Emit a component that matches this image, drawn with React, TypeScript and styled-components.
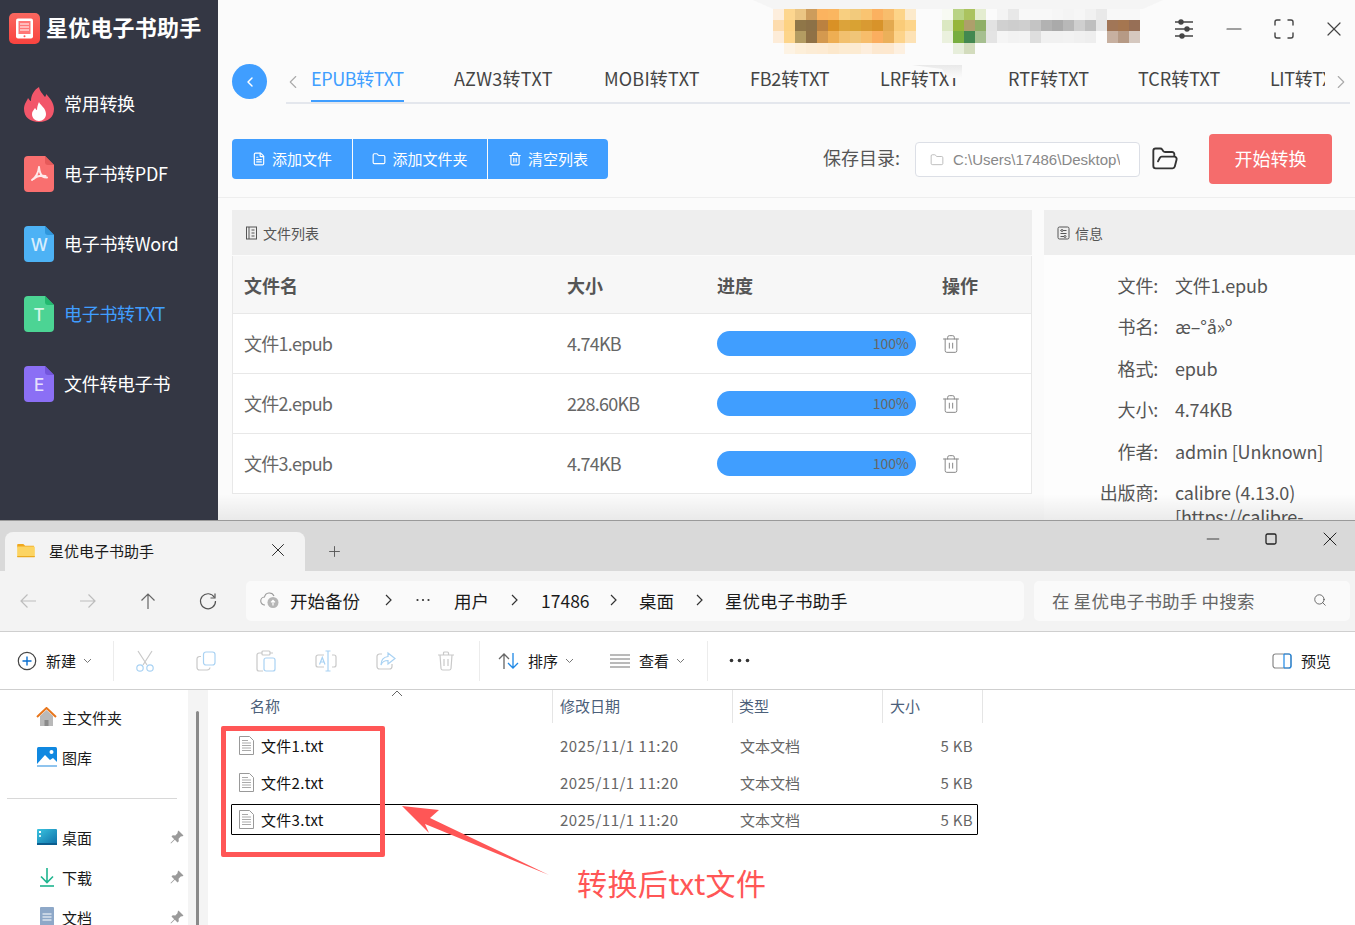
import React from "react";
import styled, { createGlobalStyle } from "styled-components";
import { ChevronLeft, ChevronRight, FileText, Folder, FolderOpen, Trash2, Minus, Maximize, X, Search, Plus } from "lucide-react";

const Global = createGlobalStyle`
  html, body { margin: 0; padding: 0; background: #fff; }
  body { font-family: "Noto Sans CJK SC", "Noto Sans", sans-serif; }
  * { box-sizing: border-box; }
`;

const Page = styled.div`
  position: relative;
  width: 1355px;
  height: 925px;
  overflow: hidden;
  display: flex;
  flex-direction: column;
`;

/* ---------- converter window ---------- */
const AppWindow = styled.div`
  position: relative;
  height: 520px;
  flex: none;
  display: flex;
  overflow: hidden;
  background: #fbfbfb;
  &::after {
    content: "";
    position: absolute;
    left: 218px;
    right: 0;
    bottom: 0;
    height: 26px;
    background: linear-gradient(to bottom, rgba(0,0,0,0), rgba(0,0,0,.07));
    pointer-events: none;
  }
`;
const Sidebar = styled.aside`
  width: 218px;
  flex: none;
  background: #343744;
  display: flex;
  flex-direction: column;
`;
const Brand = styled.div`
  height: 69px;
  padding: 13px 0 0 9px;
  display: flex;
  align-items: flex-start;
  gap: 6px;
`;
const BrandName = styled.div`
  color: #fff;
  font-size: 22px;
  font-weight: 700;
  line-height: 27px;
  letter-spacing: 0.2px;
  white-space: nowrap;
`;
const SideList = styled.nav`
  display: flex;
  flex-direction: column;
`;
const SideItem = styled.div<{ $active?: boolean }>`
  height: 70px;
  padding-left: 24px;
  display: flex;
  align-items: center;
  gap: 10px;
  font-size: 18px;
  letter-spacing: -0.3px;
  white-space: nowrap;
  color: ${(p) => (p.$active ? "#409eff" : "#fff")};
  svg { flex: none; }
`;
const SideLabel = styled.span`
  margin-top: -2px;
`;
const Main = styled.main`
  flex: 1;
  min-width: 0;
  display: flex;
  flex-direction: column;
`;
const TitleBar = styled.div`
  position: relative;
  height: 61px;
  flex: none;
  display: flex;
  justify-content: flex-end;
  align-items: center;
`;
const Mosaic = styled.svg`
  position: absolute;
  left: 525px;
  top: 0;
`;
const WinBtn = styled.div`
  width: 50px;
  height: 40px;
  margin-top: -4px;
  display: flex;
  align-items: center;
  justify-content: center;
  color: #444;
  &:last-child { margin-right: -4px; }
`;
const TabsRow = styled.div`
  position: relative;
  height: 43px;
  flex: none;
  display: flex;
  padding-left: 14px;
`;
const Back = styled.div`
  width: 35px;
  height: 35px;
  margin-top: 3px;
  border-radius: 50%;
  background: #409eff;
  color: #fff;
  display: flex;
  align-items: center;
  justify-content: center;
  flex: none;
`;
const TabBar = styled.div`
  margin-left: 19px;
  width: 1064px;
  height: 43px;
  border-bottom: 2px solid #e4e7ed;
  display: flex;
  position: relative;
`;
const TabNav = styled.div<{ $end?: boolean }>`
  width: 25px;
  flex: none;
  height: 41px;
  display: flex;
  align-items: center;
  justify-content: ${(p) => (p.$end ? "flex-end" : "flex-start")};
  color: #aaa;
  svg { margin: ${(p) => (p.$end ? "0 -2px 0 0" : "0 0 0 -4px")}; }
`;
const TabStrip = styled.div`
  width: 1015px;
  overflow: hidden;
  display: flex;
  gap: 50px;
`;
const Tab = styled.div<{ $w: number; $ls: number; $active?: boolean }>`
  flex: none;
  width: ${(p) => p.$w}px;
  height: 41px;
  line-height: 35px;
  font-size: 18px;
  letter-spacing: ${(p) => p.$ls}px;
  white-space: nowrap;
  color: ${(p) => (p.$active ? "#409eff" : "#444")};
  position: relative;
  &::after {
    content: "";
    position: absolute;
    left: 0;
    right: 0;
    bottom: 0;
    height: 2px;
    background: ${(p) => (p.$active ? "#409eff" : "transparent")};
  }
`;
const Smear = styled.div`
  position: absolute;
  left: 694px;
  top: 4px;
  width: 50px;
  height: 13px;
  background: linear-gradient(to bottom, #e9e9e9, #fbfbfb);
  clip-path: polygon(0 0, 100% 0, 100% 100%, 72% 100%, 60% 30%);
`;
const ActionRow = styled.div`
  height: 94px;
  flex: none;
  padding: 30px 23px 0 14px;
  border-bottom: 1px solid #eeeeee;
  display: flex;
  align-items: flex-start;
`;
const BtnGroup = styled.div`
  display: flex;
  height: 40px;
  margin-top: 5px;
  border-radius: 4px;
  overflow: hidden;
`;
const GroupBtn = styled.div<{ $w: number }>`
  width: ${(p) => p.$w}px;
  background: #409eff;
  color: #fff;
  font-size: 15px;
  display: flex;
  align-items: center;
  justify-content: center;
  gap: 6px;
  padding-bottom: 1px;
  & + & { margin-left: 1px; }
`;
const SaveLabel = styled.div`
  margin-left: auto;
  font-size: 18px;
  color: #555;
  line-height: 46px;
  white-space: nowrap;
`;
const PathBox = styled.div`
  width: 225px;
  height: 35px;
  margin: 8px 0 0 15px;
  border: 1px solid #dcdfe6;
  border-radius: 4px;
  background: #fff;
  display: flex;
  align-items: center;
  gap: 9px;
  padding: 0 19px 0 14px;
  color: #aaa;
  overflow: hidden;
`;
const PathText = styled.span`
  font-family: "Liberation Sans", sans-serif;
  font-size: 15px;
  color: #888;
  white-space: nowrap;
  overflow: hidden;
`;
const FolderBtn = styled.div`
  margin: 11px 30px 0 11px;
  color: #333;
  height: 28px;
`;
const StartBtn = styled.div`
  width: 123px;
  height: 50px;
  background: #f56c6c;
  border-radius: 4px;
  color: #fff;
  font-size: 18px;
  padding-bottom: 3px;
  display: flex;
  align-items: center;
  justify-content: center;
`;
const Panels = styled.div`
  flex: 1;
  display: flex;
  padding: 12px 0 0 14px;
  gap: 12px;
  min-height: 0;
`;
const ListPanel = styled.section`
  width: 800px;
  flex: none;
`;
const InfoPanel = styled.section`
  flex: 1;
  min-width: 0;
  background: #fdfdfd;
  overflow: hidden;
`;
const PanelHead = styled.div`
  height: 45px;
  background: #eeeeee;
  display: flex;
  align-items: center;
  gap: 5px;
  padding-left: 13px;
  font-size: 14px;
  color: #555;
  svg { flex: none; }
`;
const TableGrid = styled.div`
  display: grid;
  grid-template-columns: 323px 150px 225px 1fr;
  align-items: center;
  padding-left: 11px;
  border: 1px solid #e8e8e8;
  border-top: none;
  color: #666;
`;
const TableHead = styled(TableGrid)`
  height: 58px;
  margin-top: 1px;
  background: #f7f7f7;
  font-size: 18px;
  font-weight: 700;
  color: #555;
`;
const TableRow = styled(TableGrid)`
  height: 60px;
  background: #fff;
  font-size: 18px;
`;
const RowText = styled.div`
  letter-spacing: -0.75px;
  padding-bottom: 2px;
`;
const Bar = styled.div`
  width: 199px;
  height: 25px;
  border-radius: 13px;
  background: #409eff;
  color: #666;
  font-size: 14px;
  line-height: 25px;
  text-align: right;
  padding-right: 7px;
`;
const TrashCell = styled.div`
  color: #888;
  display: flex;
  margin-left: -1px;
`;
const InfoBody = styled.div`
  padding-top: 17.8px;
  display: flex;
  flex-direction: column;
  gap: 17.5px;
`;
const InfoRow = styled.div`
  display: grid;
  grid-template-columns: 114px 1fr;
  column-gap: 17px;
  font-size: 18px;
  line-height: 24px;
  color: #555;
  letter-spacing: -0.2px;
`;
const InfoLabel = styled.div`
  text-align: right;
  white-space: nowrap;
`;
const InfoValue = styled.div`
  width: 170px;
  word-break: break-word;
`;

/* ---------- explorer window ---------- */
const Explorer = styled.div`
  flex: 1;
  min-height: 0;
  display: flex;
  flex-direction: column;
  background: #fff;
  border-top: 1px solid #9a9a9a;
`;
const ExTabs = styled.div`
  height: 50px;
  flex: none;
  background: #d9d9d9;
  display: flex;
  align-items: flex-end;
  padding-left: 5px;
`;
const ExTab = styled.div`
  width: 300px;
  height: 39px;
  background: #f3f3f3;
  border-radius: 8px 8px 0 0;
  display: flex;
  align-items: center;
  padding: 0 16px 3px 12px;
  font-size: 15px;
  color: #1a1a1a;
`;
const ExTabLabel = styled.span`
  margin-left: 14px;
  flex: 1;
`;
const NewTab = styled.div`
  margin: 0 0 0 21px;
  height: 39px;
  display: flex;
  align-items: center;
  color: #555;
`;
const ExControls = styled.div`
  margin-left: auto;
  margin-right: -4px;
  align-self: flex-start;
  height: 36px;
  display: flex;
  align-items: center;
  color: #222;
`;
const ExControl = styled.div`
  width: 58.5px;
  display: flex;
  justify-content: center;
`;
const AddressRow = styled.div`
  height: 61px;
  flex: none;
  background: #f3f3f3;
  border-bottom: 1px solid #cfcfcf;
  display: flex;
  align-items: center;
  padding: 0 5px 0 0;
`;
const NavBtn = styled.div`
  width: 60px;
  flex: none;
  display: flex;
  justify-content: center;
`;
const NavGroup = styled.div`
  display: flex;
  margin-left: -2px;
  margin-right: 8px;
`;
const Crumbs = styled.div`
  width: 778px;
  height: 40px;
  background: #fafafa;
  border-radius: 5px;
  display: flex;
  align-items: center;
  padding: 0 0 2px 14px;
  font-size: 17.5px;
  color: #1a1a1a;
  white-space: nowrap;
`;
const Crumb = styled.span<{ $w: number; $pl?: number }>`
  width: ${(p) => p.$w}px;
  padding-left: ${(p) => p.$pl ?? 0}px;
  flex: none;
`;
const CrumbSep = styled.span`
  width: 26px;
  flex: none;
  display: flex;
  justify-content: center;
  color: #333;
`;
const SearchBox = styled.div`
  margin-left: 10px;
  flex: 1;
  height: 40px;
  background: #fafafa;
  border-radius: 5px;
  display: flex;
  align-items: center;
  justify-content: space-between;
  padding: 0 23px 2px 18px;
  font-size: 17.5px;
  letter-spacing: 0.17px;
  color: #666;
  white-space: nowrap;
`;
const ExToolbar = styled.div`
  height: 58px;
  flex: none;
  border-bottom: 1px solid #cfcfcf;
  display: flex;
  align-items: center;
  font-size: 15px;
  color: #1a1a1a;
  white-space: nowrap;
`;
const ToolText = styled.div<{ $w: number; $pl?: number }>`
  width: ${(p) => p.$w}px;
  padding-left: ${(p) => p.$pl ?? 0}px;
  flex: none;
  display: flex;
  align-items: center;
  gap: 9px;
`;
const Caret = styled.svg`
  margin-left: -2px;
  flex: none;
`;
const ToolSep = styled.div`
  width: 1px;
  height: 40px;
  background: #ececec;
  flex: none;
`;
const ToolSlot = styled.div<{ $w?: number }>`
  width: ${(p) => p.$w ?? 60}px;
  flex: none;
  display: flex;
  justify-content: center;
`;
const ToolSpacer = styled.div`
  flex: 1;
`;
const ExBody = styled.div`
  flex: 1;
  min-height: 0;
  display: flex;
  overflow: hidden;
`;
const ExNav = styled.nav`
  width: 188px;
  flex: none;
  padding-top: 7px;
`;
const NavItem = styled.div`
  height: 40px;
  display: flex;
  align-items: center;
  padding-left: 37px;
  font-size: 15px;
  color: #1a1a1a;
  position: relative;
  gap: 5px;
  white-space: nowrap;
`;
const Pin = styled.svg`
  position: absolute;
  left: 170px;
  top: 13px;
`;
const NavRule = styled.div`
  height: 1px;
  margin: 21px 11px 18px 7px;
  background: #d8d8d8;
`;
const ScrollTrack = styled.div`
  width: 20px;
  flex: none;
  background: #f4f4f4;
  padding: 21px 8px 0;
  margin-right: 2px;
`;
const ScrollThumb = styled.div`
  width: 3px;
  height: 300px;
  background: #8a8a8a;
  border-radius: 2px;
`;
const FilePane = styled.div`
  flex: 1;
  min-width: 0;
  position: relative;
`;
const FileHead = styled.div`
  height: 33px;
  display: flex;
  font-size: 15px;
  color: #4c607a;
`;
const HeadCell = styled.div<{ $w: number; $pl: number }>`
  width: ${(p) => p.$w}px;
  flex: none;
  padding-left: ${(p) => p.$pl}px;
  line-height: 31px;
  border-right: 1px solid #e5e5e5;
`;
const HeadCellFirst = styled(HeadCell)`
  position: relative;
  svg { position: absolute; left: 181px; top: 0; }
`;
const FileRows = styled.div`
  padding: 7px 0 0 21px;
  display: flex;
  flex-direction: column;
  gap: 6px;
`;
const FileRow = styled.div<{ $sel?: boolean }>`
  width: 747px;
  height: 31px;
  display: grid;
  grid-template-columns: 22px 299px 180px 1fr;
  align-items: center;
  font-size: 15px;
  color: #666;
  padding: 0 5px 0 8px;
  border-radius: 1px;
  outline: ${(p) => (p.$sel ? "1.5px solid #000" : "none")};
  outline-offset: -1px;
`;
const FileName = styled.div`
  color: #111;
  letter-spacing: 0.3px;
`;
const FileDate = styled.div`
  letter-spacing: 0.52px;
`;
const FileTail = styled.div`
  display: flex;
  justify-content: space-between;
`;
const FileSize = styled.div`
  text-align: right;
  letter-spacing: 0.3px;
`;

/* ---------- annotation ---------- */
const RedFrame = styled.div`
  position: absolute;
  left: 221px;
  top: 726px;
  width: 164px;
  height: 131px;
  border: 5px solid #ff5656;
  border-radius: 2px;
  pointer-events: none;
`;
const Arrow = styled.svg`
  position: absolute;
  left: 395px;
  top: 800px;
`;
const Note = styled.div`
  position: absolute;
  left: 577px;
  top: 860px;
  font-size: 30px;
  letter-spacing: 0.4px;
  line-height: 44px;
  color: #ff5656;
  white-space: nowrap;
`;

/* ---------- drawings ---------- */
const BLOCK_A: string[][] = [
  ["#fdeedd","#fdd68f","#ebc583","#cd9c5c","#fbb35f","#fab660","#f8cf80","#f2ca7c","#f9c471","#fbb160","#f8bd6c","#fdd488","#fceacb"],
  ["#fddcae","#fdd283","#8f7648","#8c7147","#bb8140","#d99126","#dca33a","#d9a233","#d99a32","#d8932a","#e3a94f","#facb78","#fdd58b"],
  ["#fdecd8","#fdd58a","#b39c62","#8f7146","#d4994f","#eeae53","#f2c06f","#f0c578","#f7bd6b","#fbae5f","#ebb05a","#fdd38a","#fde2b5"],
  ["#fbfbfb","#fdf3e4","#fdefd9","#fcecd5","#fdebd3","#fce8cc","#fcebd2","#fcebd2","#fdeedd","#fce8d0","#fde8cf","#fdf0e0","#fbfbfb"],
];
const BLOCK_B: string[][] = [
  ["#f8faf3","#b9d385","#abc35f","#e4edd0","#fbfbfb","#f4f4f4","#e8e8e8","#f8f8f8","#f8f8f8","#f8f8f8","#f6f6f6","#f4f4f4","#f6f6f6","#f1f1f1","#e9e9e9","#f8f8f8","#f8f8f8","#f8f8f8"],
  ["#dbe8c2","#96b63b","#ae9f6b","#8fae66","#e2e2e2","#d0d0d0","#cdcdcd","#cfcfcf","#c4c4c4","#b2b2b2","#aaaaaa","#b8b8b8","#cfcfcf","#bfbfbf","#e6e6e6","#a17657","#a57650","#976f56"],
  ["#ebf1de","#78ae3f","#438850","#a6bf90","#e4e4e4","#f5f5f5","#f2f2f2","#f3f3f3","#dedede","#f1f1f1","#f1f1f1","#f2f2f2","#f0f0f0","#eeeeee","#fbfbfb","#c7b0a0","#b69a85","#d5c8bf"],
  ["#fbfbfb","#e7eedb","#d3dcbd","#fbfbfb"],
];

const MosaicArt = () => (
  <Mosaic width="420" height="56" viewBox="0 0 420 56">
    <path d="M10 0H420L400 9H30Z" fill="#f4f4f4" opacity="0.8" />
    {BLOCK_A.map((row, y) => row.map((c, x) => <rect key={`a${y}-${x}`} x={30 + x * 11} y={y === 3 ? 43 : 9 + y * 11} width="11" height={y === 2 ? 12 : 11} fill={c} />))}
    {BLOCK_B.map((row, y) => row.map((c, x) => <rect key={`b${y}-${x}`} x={199 + x * 11} y={y === 3 ? 43 : 9 + y * 11} width="11" height={y === 2 ? 12 : 11} fill={c} />))}
  </Mosaic>
);

const LogoIcon = () => (
  <svg width="31" height="31" viewBox="0 0 31 31">
    <defs>
      <linearGradient id="lg" x1="0" y1="0" x2="0" y2="1">
        <stop offset="0" stopColor="#f9675f" />
        <stop offset="1" stopColor="#f9433f" />
      </linearGradient>
    </defs>
    <rect width="31" height="31" rx="5" fill="url(#lg)" />
    <rect x="7" y="5.5" width="17" height="20" rx="2" fill="#fff" />
    <rect x="9.5" y="8" width="12" height="13" fill="#f77" />
    <path d="M11 11h9M11 14h9M11 17h9" stroke="#fff" strokeWidth="1" />
    <circle cx="15.5" cy="23.3" r="1" fill="#f55" />
  </svg>
);

const Flame = () => (
  <svg width="32" height="36" viewBox="0 0 32 36" style={{ marginLeft: -1, marginRight: -1 }}>
    <path d="M16 1c1 5 4 7 6 10 1-1 1-2 1-3 4 4 8 9 8 15 0 8-6 13-15 13S1 31 1 23c0-5 3-8 4-11 1 1 2 3 3 3 0-6 3-11 8-14z" fill="#f2566a" />
    <path d="M16 16c1 3 7 6 7 12 0 4-3 7-7 7s-7-3-7-7c0-3 2-4 3-6 1 1 1 2 2 2 0-3 1-6 2-8z" fill="#fff" />
  </svg>
);

const FileBadge = ({ bg, fold, letter }: { bg: string; fold: string; letter?: string }) => (
  <svg width="30" height="36" viewBox="0 0 30 36">
    <path d="M4 0h17l9 9v23a4 4 0 0 1-4 4H4a4 4 0 0 1-4-4V4a4 4 0 0 1 4-4z" fill={bg} />
    <path d="M21 0l9 9h-6a3 3 0 0 1-3-3z" fill={fold} />
    {letter ? (
      <text x="15" y="24.5" textAnchor="middle" fontSize="17" fontWeight="500" fill="#fff" fillOpacity="0.8" fontFamily="Inter, sans-serif">{letter}</text>
    ) : (
      <path d="M15 11c-.5 5-3 10-7 13M15 11c.5 5 2 8 3.5 9.5 1.5 1 3 1 4.5 1M9.5 23c3-3 8-3.5 12-3" fill="none" stroke="#fff" strokeOpacity=".85" strokeWidth="2" strokeLinecap="round" />
    )}
  </svg>
);

const Sliders = () => (
  <svg width="22" height="22" viewBox="0 0 22 22" fill="none" stroke="#444" strokeWidth="1.4">
    <path d="M2 4h18M2 11h18M2 18h18" />
    <circle cx="8" cy="4" r="2" fill="#444" />
    <circle cx="14" cy="11" r="2" fill="#444" />
    <circle cx="9" cy="18" r="2" fill="#444" />
  </svg>
);

const ListIcon = () => (
  <svg width="13" height="14" viewBox="0 0 13 14" fill="none" stroke="#555" strokeWidth="1">
    <rect x="1.5" y="1" width="10" height="12" />
    <path d="M4 1v12M6.5 4h3M6.5 7h3M6.5 10h3" />
  </svg>
);
const InfoIcon = () => (
  <svg width="13" height="14" viewBox="0 0 13 14" fill="none" stroke="#555" strokeWidth="1">
    <rect x="1" y="1" width="11" height="12" rx="1.5" />
    <path d="M3.5 4.5h6M3.5 7.5h6M3.5 10.5h4" />
    <circle cx="5" cy="4.5" r="1" fill="#fff" />
    <circle cx="8" cy="10.5" r="1" fill="#fff" />
  </svg>
);

const ExFolder = () => (
  <svg width="18" height="15" viewBox="0 0 20 17">
    <path d="M0 2a1 1 0 0 1 1-1h6l2 2h10v2H0z" fill="#f0a81e" />
    <path d="M0 4h19a1 1 0 0 1 1 1v10a1 1 0 0 1-1 1H1a1 1 0 0 1-1-1z" fill="#fcd462" />
    <path d="M0 14.6h20v.6a1 1 0 0 1-1 1H1a1 1 0 0 1-1-1z" fill="#eaa91e" />
  </svg>
);

const ArrowGlyph = ({ dir, color }: { dir: "l" | "r" | "u"; color: string }) => {
  const d = dir === "l" ? "M18 10H3M9.5 3.5L3 10l6.5 6.5" : dir === "r" ? "M2 10h15M10.5 3.5L17 10l-6.5 6.5" : "M10 18V3M3.5 9.5L10 3l6.5 6.5";
  return (
    <svg width="20" height="20" viewBox="0 0 20 20" fill="none" stroke={color} strokeWidth="1.2">
      <path d={d} />
    </svg>
  );
};
const Refresh = () => (
  <svg width="20" height="20" viewBox="0 0 20 20" fill="none" stroke="#555" strokeWidth="1.2">
    <path d="M16.5 6.5A7.5 7.5 0 1 0 17.5 10" />
    <path d="M17 2.5v4.5h-4.5" />
  </svg>
);
const CloudUp = () => (
  <svg width="20" height="20" viewBox="0 0 20 20" style={{ marginRight: 10, flex: "none" }}>
    <path d="M5 15a4 4 0 0 1-.5-8A5 5 0 0 1 14 6" fill="none" stroke="#999" strokeWidth="1.1" />
    <circle cx="13" cy="12.5" r="5.5" fill="#b5b5b5" />
    <path d="M13 15.5v-5M11 12.3l2-2 2 2" fill="none" stroke="#fff" strokeWidth="1.2" />
  </svg>
);
const SepChevron = () => (
  <svg width="9" height="14" viewBox="0 0 9 14" fill="none" stroke="#333" strokeWidth="1.2">
    <path d="M2 2l5 5-5 5" />
  </svg>
);
const BreadDots = () => (
  <svg width="14" height="4" viewBox="0 0 14 4" fill="#333">
    <circle cx="1.5" cy="2" r="1.1" /><circle cx="7" cy="2" r="1.1" /><circle cx="12.5" cy="2" r="1.1" />
  </svg>
);
const ToolDots = () => (
  <svg width="21" height="5" viewBox="0 0 21 5" fill="#333">
    <circle cx="2.5" cy="2.5" r="1.8" /><circle cx="10.5" cy="2.5" r="1.8" /><circle cx="18.5" cy="2.5" r="1.8" />
  </svg>
);
const Down = () => (
  <Caret width="9" height="6" viewBox="0 0 9 6" fill="none" stroke="#777" strokeWidth="1">
    <path d="M1 1l3.5 3.5L8 1" />
  </Caret>
);

const NewIcon = () => (
  <svg width="20" height="20" viewBox="0 0 20 20" fill="none">
    <circle cx="10" cy="10" r="8.7" stroke="#444" strokeWidth="1.2" />
    <path d="M10 5.5v9M5.5 10h9" stroke="#0a6fd0" strokeWidth="1.4" />
  </svg>
);
const BLUE = "#a9d2f3";
const GREY = "#c9c9c9";
const Cut = () => (
  <svg width="20" height="22" viewBox="0 0 20 22" fill="none" strokeWidth="1.2">
    <path d="M3 1l9 14M17 1L8 15" stroke={GREY} />
    <circle cx="5" cy="18" r="3.2" stroke={BLUE} />
    <circle cx="15" cy="18" r="3.2" stroke={BLUE} />
  </svg>
);
const CopyI = () => (
  <svg width="20" height="20" viewBox="0 0 20 20" fill="none" strokeWidth="1.2">
    <rect x="7.5" y="1" width="11.5" height="13" rx="2.5" stroke={BLUE} />
    <path d="M5 5.5H3.5A2.5 2.5 0 0 0 1 8v8.5A2.5 2.5 0 0 0 3.5 19H11a3 3 0 0 0 3-2.5" stroke={GREY} />
  </svg>
);
const Paste = () => (
  <svg width="20" height="22" viewBox="0 0 20 22" fill="none" strokeWidth="1.2">
    <path d="M6 3H3a2 2 0 0 0-2 2v14a2 2 0 0 0 2 2h4M14 3h3" stroke={GREY} />
    <rect x="6" y="1" width="8" height="4" rx="1" stroke={GREY} />
    <rect x="8" y="8" width="11" height="13" rx="2" stroke={BLUE} />
  </svg>
);
const Rename = () => (
  <svg width="22" height="22" viewBox="0 0 22 22" fill="none" strokeWidth="1.2">
    <path d="M9 5H3a2 2 0 0 0-2 2v8a2 2 0 0 0 2 2h6M17 5h2a2 2 0 0 1 2 2v8a2 2 0 0 1-2 2h-2" stroke={GREY} />
    <path d="M13 1v20M10.5 1h5M10.5 21h5" stroke={BLUE} />
    <path d="M4.5 14.5l2.8-7 2.7 7M5.5 12h3.6" stroke={BLUE} />
  </svg>
);
const Share = () => (
  <svg width="20" height="20" viewBox="0 0 20 20" fill="none" strokeWidth="1.2">
    <path d="M6 3H3.5A2.5 2.5 0 0 0 1 5.5v10A2.5 2.5 0 0 0 3.5 18h10a2.5 2.5 0 0 0 2.5-2.5V13" stroke={GREY} />
    <path d="M12 2l7 5.5-7 5.5V9.5C8 9.5 6 11 5 14c0-5 3-8 7-8.5z" stroke={BLUE} />
  </svg>
);
const TrashGrey = () => (
  <svg width="18" height="20" viewBox="0 0 18 20" fill="none" stroke={GREY} strokeWidth="1.2">
    <path d="M1 4h16M6.5 4V2a1 1 0 0 1 1-1h3a1 1 0 0 1 1 1v2M3 4l1 13.5A1.8 1.8 0 0 0 5.8 19h6.4a1.8 1.8 0 0 0 1.8-1.5L15 4M7 8v7M11 8v7" />
  </svg>
);
const SortI = () => (
  <svg width="21" height="18" viewBox="0 0 21 18" fill="none" strokeWidth="1.3">
    <path d="M6 17V2M1 7l5-5 5 5" stroke="#666" />
    <path d="M15 1v15M10 11l5 5 5-5" stroke="#1e88e5" />
  </svg>
);
const ViewI = () => (
  <svg width="20" height="14" viewBox="0 0 20 14" stroke="#777" strokeWidth="1.2">
    <path d="M0 1h20M0 5h20M0 9h20M0 13h20" />
  </svg>
);
const Preview = () => (
  <svg width="20" height="16" viewBox="0 0 20 16" fill="none" strokeWidth="1.2">
    <rect x="1" y="1" width="18" height="14" rx="2.5" stroke="#888" />
    <path d="M12 1v14M12 1h5a2 2 0 0 1 2 2v10a2 2 0 0 1-2 2h-5" stroke="#1e88e5" />
  </svg>
);
const Home = () => (
  <svg width="21" height="20" viewBox="0 0 21 20" style={{ marginLeft: -1 }}>
    <path d="M4 9l6.5-6L17 9v10H4z" fill="#b9b9b9" />
    <rect x="8.5" y="13" width="4" height="6" fill="#8a8a8a" />
    <path d="M1 10l9.5-9L20 10" fill="none" stroke="#e8761c" strokeWidth="2" />
  </svg>
);
const Gallery = () => (
  <svg width="20" height="20" viewBox="0 0 20 20">
    <rect width="20" height="19" rx="1.5" fill="#1088e0" />
    <path d="M0 17l8-9 5 5 3-2 4 4v4H0z" fill="#fff" />
    <circle cx="14.5" cy="5" r="2" fill="#fff" />
    <rect y="18" width="20" height="2" fill="#8fc4ee" />
  </svg>
);
const Desk = () => (
  <svg width="20" height="16" viewBox="0 0 20 16">
    <defs>
      <linearGradient id="dk" x1="0" y1="0" x2="1" y2="1">
        <stop offset="0" stopColor="#3ac4e0" />
        <stop offset="1" stopColor="#0f70a8" />
      </linearGradient>
    </defs>
    <rect width="20" height="15" rx="1" fill="url(#dk)" />
    <rect x="2" y="2" width="2" height="2" fill="#fff" />
    <rect x="2" y="6" width="2" height="2" fill="#cdeff7" />
    <rect y="14" width="20" height="2" fill="#0c5d8e" />
  </svg>
);
const Download = () => (
  <svg width="20" height="20" viewBox="0 0 20 20" fill="none" stroke="#1fb58f" strokeWidth="1.6">
    <path d="M10 1v14M4 9.5l6 6 6-6" />
    <path d="M3 19h14" />
  </svg>
);
const Doc = () => (
  <svg width="20" height="20" viewBox="0 0 20 20">
    <rect x="3" width="14" height="20" rx="1" fill="#8ea8c8" />
    <path d="M5.5 7h9M5.5 10h9M5.5 13h9" stroke="#fff" strokeWidth="1.2" />
  </svg>
);
const PinIcon = () => (
  <Pin width="14" height="14" viewBox="0 0 14 14" fill="#9a9a9a">
    <path d="M8.5 0.5l5 5-1.5 1-1-.2-2.4 2.4.2 2.6-1.3 1.2-2.7-2.7L1 13.5l-.5-.5 3.7-3.8L1.5 6.5 2.7 5.2l2.6.2L7.7 3 7.5 2z" />
  </Pin>
);
const TxtIcon = () => (
  <svg width="15" height="19" viewBox="0 0 15 19" fill="#fff" stroke="#999" strokeWidth="1">
    <path d="M.5.5h10l4 4v14H.5z" />
    <path d="M3 4.5h6M3 7h9M3 9.5h9M3 12h9M3 14.5h9" fill="none" stroke="#aaa" />
  </svg>
);

const TABS: [string, number, number][] = [
  ["EPUB转TXT", 93, -0.4], ["AZW3转TXT", 100, 0.3], ["MOBI转TXT", 96, 0.2], ["FB2转TXT", 80, -0.2],
  ["LRF转TXT", 78, -0.1], ["RTF转TXT", 80, 0], ["TCR转TXT", 82, 0], ["LIT转TXT", 80, -0.4],
];
const FILES = [["文件1.epub", "4.74KB"], ["文件2.epub", "228.60KB"], ["文件3.epub", "4.74KB"]];
const INFO: [string, string][] = [
  ["文件:", "文件1.epub"], ["书名:", "æ–°å»º"], ["格式:", "epub"], ["大小:", "4.74KB"],
  ["作者:", "admin [Unknown]"], ["出版商:", "calibre (4.13.0) [https://calibre-ebook.com]"],
];
const TXT = ["文件1.txt", "文件2.txt", "文件3.txt"];

export default function App() {
  return (
    <Page>
      <Global />
      <AppWindow>
        <Sidebar>
          <Brand><LogoIcon /><BrandName>星优电子书助手</BrandName></Brand>
          <SideList>
            <SideItem><Flame /><SideLabel>常用转换</SideLabel></SideItem>
            <SideItem><FileBadge bg="#f96f6f" fold="#e65a5a" /><SideLabel>电子书转PDF</SideLabel></SideItem>
            <SideItem><FileBadge bg="#4db2f5" fold="#2f96dc" letter="W" /><SideLabel>电子书转Word</SideLabel></SideItem>
            <SideItem $active><FileBadge bg="#4cd494" fold="#22b96f" letter="T" /><SideLabel>电子书转TXT</SideLabel></SideItem>
            <SideItem><FileBadge bg="#8b6ff5" fold="#7355dc" letter="E" /><SideLabel>文件转电子书</SideLabel></SideItem>
          </SideList>
        </Sidebar>
        <Main>
          <TitleBar>
            <MosaicArt />
            <WinBtn><Sliders /></WinBtn>
            <WinBtn><Minus size={24} strokeWidth={1.2} /></WinBtn>
            <WinBtn><Maximize size={24} strokeWidth={1.4} /></WinBtn>
            <WinBtn><X size={24} strokeWidth={1.2} /></WinBtn>
          </TitleBar>
          <TabsRow>
            <Back><ChevronLeft size={16} strokeWidth={2.2} /></Back>
            <TabBar>
              <TabNav><ChevronLeft size={22} strokeWidth={1.2} /></TabNav>
              <TabStrip>
                {TABS.map(([t, w, ls], i) => <Tab key={t} $w={w} $ls={ls} $active={i === 0}>{t}</Tab>)}
              </TabStrip>
              <TabNav $end><ChevronRight size={22} strokeWidth={1.2} /></TabNav>
            </TabBar>
            <Smear />
          </TabsRow>
          <ActionRow>
            <BtnGroup>
              <GroupBtn $w={120}><FileText size={14} />添加文件</GroupBtn>
              <GroupBtn $w={134}><Folder size={14} />添加文件夹</GroupBtn>
              <GroupBtn $w={120}><Trash2 size={14} />清空列表</GroupBtn>
            </BtnGroup>
            <SaveLabel>保存目录:</SaveLabel>
            <PathBox><Folder size={14} strokeWidth={1.3} style={{ flex: "none" }} /><PathText>C:\Users\17486\Desktop\</PathText></PathBox>
            <FolderBtn><FolderOpen size={28} strokeWidth={1.6} /></FolderBtn>
            <StartBtn>开始转换</StartBtn>
          </ActionRow>
          <Panels>
            <ListPanel>
              <PanelHead><ListIcon />文件列表</PanelHead>
              <TableHead><div>文件名</div><div>大小</div><div>进度</div><div>操作</div></TableHead>
              {FILES.map(([n, s]) => (
                <TableRow key={n}>
                  <RowText>{n}</RowText><RowText>{s}</RowText>
                  <Bar>100%</Bar>
                  <TrashCell><Trash2 size={20} strokeWidth={1.2} /></TrashCell>
                </TableRow>
              ))}
            </ListPanel>
            <InfoPanel>
              <PanelHead><InfoIcon />信息</PanelHead>
              <InfoBody>
                {INFO.map(([k, v]) => (
                  <InfoRow key={k}><InfoLabel>{k}</InfoLabel><InfoValue>{v}</InfoValue></InfoRow>
                ))}
              </InfoBody>
            </InfoPanel>
          </Panels>
        </Main>
      </AppWindow>

      <Explorer>
        <ExTabs>
          <ExTab>
            <ExFolder />
            <ExTabLabel>星优电子书助手</ExTabLabel>
            <X size={22} strokeWidth={1} />
          </ExTab>
          <NewTab><Plus size={17} strokeWidth={1.3} /></NewTab>
          <ExControls>
            <ExControl><Minus size={20} strokeWidth={1} /></ExControl>
            <ExControl><svg width="12" height="12" viewBox="0 0 12 12" fill="none" stroke="#222" strokeWidth="1.3"><rect x="1" y="1" width="10" height="10" rx="1.5" /></svg></ExControl>
            <ExControl><X size={24} strokeWidth={1} /></ExControl>
          </ExControls>
        </ExTabs>
        <AddressRow>
          <NavGroup>
            <NavBtn><ArrowGlyph dir="l" color="#bdbdbd" /></NavBtn>
            <NavBtn><ArrowGlyph dir="r" color="#bdbdbd" /></NavBtn>
            <NavBtn><ArrowGlyph dir="u" color="#666" /></NavBtn>
            <NavBtn><Refresh /></NavBtn>
          </NavGroup>
          <Crumbs>
            <CloudUp />
            <Crumb $w={85}>开始备份</Crumb>
            <CrumbSep><SepChevron /></CrumbSep>
            <Crumb $w={9} />
            <CrumbSep><BreadDots /></CrumbSep>
            <Crumb $w={65} $pl={18}>用户</Crumb>
            <CrumbSep><SepChevron /></CrumbSep>
            <Crumb $w={73} $pl={14}>17486</Crumb>
            <CrumbSep><SepChevron /></CrumbSep>
            <Crumb $w={60} $pl={13}>桌面</Crumb>
            <CrumbSep><SepChevron /></CrumbSep>
            <Crumb $w={150} $pl={13}>星优电子书助手</Crumb>
          </Crumbs>
          <SearchBox>在 星优电子书助手 中搜索<Search size={14} strokeWidth={1.3} color="#444" /></SearchBox>
        </AddressRow>
        <ExToolbar>
          <ToolText $w={113} $pl={17}><NewIcon />新建<Down /></ToolText>
          <ToolSep />
          <ToolSlot $w={62}><Cut /></ToolSlot>
          <ToolSlot><CopyI /></ToolSlot>
          <ToolSlot><Paste /></ToolSlot>
          <ToolSlot><Rename /></ToolSlot>
          <ToolSlot><Share /></ToolSlot>
          <ToolSlot><TrashGrey /></ToolSlot>
          <ToolSlot $w={3} />
          <ToolSep />
          <ToolText $w={130} $pl={18}><SortI />排序<Down /></ToolText>
          <ToolText $w={97}><ViewI />查看<Down /></ToolText>
          <ToolSep />
          <ToolSlot $w={62}><ToolDots /></ToolSlot>
          <ToolSpacer />
          <ToolText $w={83}><Preview />预览</ToolText>
        </ExToolbar>
        <ExBody>
          <ExNav>
            <NavItem><Home />主文件夹</NavItem>
            <NavItem><Gallery />图库</NavItem>
            <NavRule />
            <NavItem><Desk />桌面<PinIcon /></NavItem>
            <NavItem><Download />下载<PinIcon /></NavItem>
            <NavItem><Doc />文档<PinIcon /></NavItem>
          </ExNav>
          <ScrollTrack><ScrollThumb /></ScrollTrack>
          <FilePane>
            <FileHead>
              <HeadCellFirst $w={343} $pl={40}>
                名称
                <svg width="12" height="7" viewBox="0 0 12 7" fill="none" stroke="#666"><path d="M1 6l5-5 5 5" /></svg>
              </HeadCellFirst>
              <HeadCell $w={180} $pl={7}>修改日期</HeadCell>
              <HeadCell $w={150} $pl={6}>类型</HeadCell>
              <HeadCell $w={100} $pl={7}>大小</HeadCell>
            </FileHead>
            <FileRows>
              {TXT.map((n, i) => (
                <FileRow key={n} $sel={i === 2}>
                  <TxtIcon />
                  <FileName>{n}</FileName>
                  <FileDate>2025/11/1 11:20</FileDate>
                  <FileTail>
                    <span>文本文档</span>
                    <FileSize>5 KB</FileSize>
                  </FileTail>
                </FileRow>
              ))}
            </FileRows>
          </FilePane>
        </ExBody>
      </Explorer>

      <RedFrame />
      <Arrow width="160" height="80" viewBox="0 0 160 80">
        <path d="M7 6L44 10 35 18 154 75 30 24 34 33Z" fill="#ff5656" />
      </Arrow>
      <Note>转换后txt文件</Note>
    </Page>
  );
}
